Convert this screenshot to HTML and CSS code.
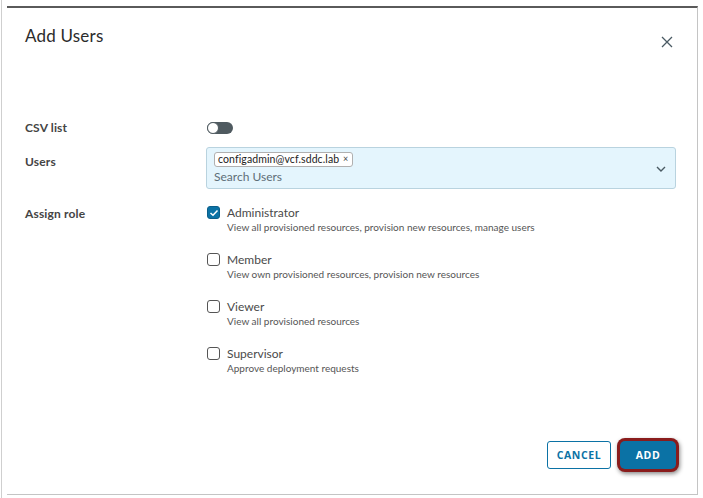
FILE: index.html
```html
<!DOCTYPE html>
<html>
<head>
<meta charset="utf-8">
<link rel="stylesheet" href="styles.css">
</head>
<body>
<div class="screen">
  <div class="dialog">
    <div class="header">
      <h1 class="title">Add Users</h1>
      <button class="close" aria-label="Close">
        <svg width="12" height="12" viewBox="0 0 12 12"><path d="M1 1 L11 11 M11 1 L1 11" stroke="#4a5a63" stroke-width="1.3" fill="none"/></svg>
      </button>
    </div>
    <div class="form">
      <div class="row row-csv">
        <label class="label">CSV list</label>
        <div class="field"><span class="toggle"><span class="knob"></span></span></div>
      </div>
      <div class="row row-users">
        <label class="label label-users">Users</label>
        <div class="field">
          <div class="combo">
            <div class="combo-main">
              <span class="chip">configadmin@vcf.sddc.lab <span class="chip-x">×</span></span>
              <span class="placeholder">Search Users</span>
            </div>
            <svg class="chev" width="10" height="6" viewBox="0 0 10 6"><path d="M1 1 L5 5 L9 1" stroke="#4a5a63" stroke-width="1.4" fill="none"/></svg>
          </div>
        </div>
      </div>
      <div class="row row-roles">
        <label class="label label-role">Assign role</label>
        <div class="field roles">
          <div class="role">
            <span class="cb checked"><svg width="10" height="8" viewBox="0 0 10 8"><path d="M1.5 4 L4 6.3 L8.5 1.5" stroke="#fff" stroke-width="1.5" fill="none"/></svg></span>
            <div class="role-text"><div class="role-name">Administrator</div><div class="role-desc">View all provisioned resources, provision new resources, manage users</div></div>
          </div>
          <div class="role">
            <span class="cb"></span>
            <div class="role-text"><div class="role-name">Member</div><div class="role-desc">View own provisioned resources, provision new resources</div></div>
          </div>
          <div class="role">
            <span class="cb"></span>
            <div class="role-text"><div class="role-name">Viewer</div><div class="role-desc">View all provisioned resources</div></div>
          </div>
          <div class="role">
            <span class="cb"></span>
            <div class="role-text"><div class="role-name">Supervisor</div><div class="role-desc">Approve deployment requests</div></div>
          </div>
        </div>
      </div>
    </div>
    <div class="footer">
      <button class="btn btn-outline">CANCEL</button>
      <button class="btn btn-primary">ADD</button>
    </div>
  </div>
</div>
</body>
</html>
```
FILE: styles.css
```css
* { box-sizing: border-box; }
html, body { margin: 0; padding: 0; background: #fff; }
body { font-family: "Lato", "Open Sans", sans-serif; color: #333; }
.screen {
  width: 703px; height: 498px;
  margin-left: 1px;
  border-left: 1px solid #cfcfcf;
  padding: 6px 0 0 5px;
}
.dialog {
  width: 691px; height: 489px;
  border-top: 2px solid #5a5a5a;
  border-right: 1px solid #c4c4c4;
  border-bottom: 1px solid #c4c4c4;
  display: flex; flex-direction: column;
  padding: 0 21px 0 18px;
}
.header { display: flex; justify-content: space-between; align-items: flex-start; padding-top: 16px; height: 107px; }
.title { margin: 0; font-weight: 400; font-size: 17px; line-height: 24px; color: #2b2b2b; letter-spacing: 0.2px; }
.close { border: 0; background: none; padding: 0; margin: 12px 3px 0 0; width: 12px; height: 12px; display: block; }
.close svg { display: block; }
.form { display: flex; flex-direction: column; }
.row { display: grid; grid-template-columns: 182px 1fr; }
.label { font-size: 12px; font-weight: 700; color: #444; line-height: 16px; letter-spacing: 0.15px; }
.row-csv { height: 21px; align-items: center; margin-top: 2px; }
.toggle { display: block; position: relative; width: 26px; height: 12px; border-radius: 6px; background: #4f5a60; }
.knob { position: absolute; left: 0; top: 0; width: 12px; height: 12px; border-radius: 50%; background: #fff; border: 1.5px solid #4f5a60; }
.row-users { margin-top: 9px; }
.label-users { padding-top: 7px; }
.combo {
  height: 42px; border: 1px solid #b9d3df; border-radius: 3px; background: #e4f5fd;
  display: flex; align-items: center; justify-content: space-between; padding: 0 9px 0 7px;
  margin-left: -1px;
}
.combo-main { display: flex; flex-direction: column; align-items: flex-start; gap: 0; padding-top: 1px; }
.chip { font-size: 10.5px; line-height: 12px; background: #fff; border: 1px solid #b0b0b0; border-radius: 3px; padding: 0 4px 0 3px; color: #222; letter-spacing: 0.1px; }
.chip-x { font-size: 9px; margin-left: 1px; color: #444; position: relative; top: -1px; }
.placeholder { font-size: 12px; color: #5e6e78; line-height: 18px; margin-top: 1px; }
.chev { margin-top: 2px; }
.row-roles { margin-top: 17px; }
.label-role { padding-top: 0; }
.roles { display: flex; flex-direction: column; gap: 19px; }
.role { display: flex; align-items: flex-start; gap: 7px; height: 28px; }
.cb { width: 13px; height: 13px; border: 1.3px solid #555; border-radius: 3px; display: flex; align-items: center; justify-content: center; flex: none; margin-left: 0; margin-top: 0; }
.cb.checked { background: #0b72a5; border-color: #0b5f8a; }
.role-text { display: flex; flex-direction: column; }
.role-name { font-size: 12px; line-height: 14px; color: #4a4a4a; }
.role-desc { font-size: 10px; line-height: 14px; color: #555; }
.footer { margin-top: auto; display: flex; justify-content: flex-end; gap: 9px; padding-bottom: 25px; }
.btn { height: 28px; border-radius: 3px; font-family: "Open Sans", sans-serif; font-weight: 700; font-size: 10.5px; letter-spacing: 0.6px; padding: 0; }
.btn-outline { width: 64px; background: #fff; border: 1px solid #0b72a5; color: #0b72a5; margin-left: -1px; }
.btn-primary { width: 56px; background: #0b72a5; border: 0; color: #fff; box-shadow: 0 0 0 3px #8a1c1c, 1px 2px 4px 3px rgba(0,0,0,0.45); border-radius: 5px; }
```
